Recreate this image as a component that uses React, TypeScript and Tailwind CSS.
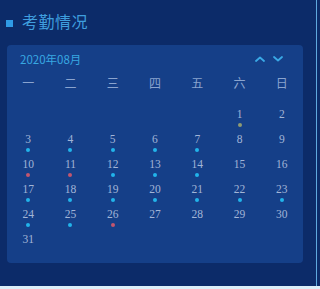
import React from 'react';

const WEEK = ['一', '二', '三', '四', '五', '六', '日'];

// dot marks per day: c = normal, r = abnormal, y = today
const MARKS: Record<number, 'c' | 'r' | 'y'> = {
  1: 'y',
  3: 'c', 4: 'c', 5: 'c', 6: 'c', 7: 'c',
  10: 'r', 11: 'r', 12: 'c', 13: 'c', 14: 'c',
  17: 'c', 18: 'c', 19: 'c', 20: 'c', 21: 'c', 22: 'c', 23: 'c',
  24: 'c', 25: 'c', 26: 'r',
};

const dotClass = {
  c: 'bg-[#22b4ea]',
  r: 'bg-[#c2566e]',
  y: 'bg-[#8f9b72]',
};

const Chevron: React.FC<{ up?: boolean }> = ({ up }) => (
  <svg width="10" height="6" viewBox="0 0 10 6" className="text-[#3aa9e6]">
    <path
      d={up ? 'M1 5 L5 1.5 L9 5' : 'M1 1 L5 4.5 L9 1'}
      fill="none"
      stroke="currentColor"
      strokeWidth="1.8"
      strokeLinecap="round"
      strokeLinejoin="round"
    />
  </svg>
);

export default function App() {
  const cells: (number | null)[] = [...Array(5).fill(null), ...Array.from({ length: 31 }, (_, i) => i + 1)];

  return (
    <div className="w-[320px] h-[289px] bg-[#dceff9] flex flex-col overflow-hidden">
      <div className="h-[286px] flex">
        <div className="w-[316px] bg-[#0c2b69] flex flex-col">
          {/* title */}
          <div className="h-[45px] flex items-start pt-[10px] pl-[6px]">
            <div className="w-[7px] h-[7px] bg-[#2f9be6] mt-[10px]"></div>
            <span className="ml-[9px] text-[16px] leading-[22px] text-[#3f9ede] tracking-[0.5px] font-['Noto_Sans_CJK_SC',sans-serif]">
              考勤情况
            </span>
          </div>

          {/* calendar card */}
          <div className="ml-[7px] w-[296px] h-[218px] rounded-[4px] bg-[#153f88] flex flex-col">
            <div className="h-[28px] pt-[7px] pl-[13px] pr-[20px] flex items-start justify-between">
              <span className="text-[11.5px] leading-[14px] text-[#38a8e2] font-['Noto_Sans_CJK_SC',sans-serif]">
                2020年08月
              </span>
              <div className="flex items-center gap-[8px] mt-[4px]">
                <Chevron up />
                <Chevron />
              </div>
            </div>

            <div className="grid grid-cols-7 h-[20px] items-center">
              {WEEK.map(w => (
                <div key={w} className="text-center text-[12px] leading-[14px] text-[#8aa4cf] font-['Noto_Sans_CJK_SC',sans-serif]">
                  {w}
                </div>
              ))}
            </div>

            <div className="grid grid-cols-7 mt-[15px] font-['Liberation_Serif',serif]">
              {cells.map((d, i) => (
                <div key={i} className="h-[25px] flex flex-col items-center">
                  {d && (
                    <>
                      <span className="text-[11.5px] leading-[13px] text-[#a2b5d7]">{d}</span>
                      {MARKS[d] && <span className={`mt-[2px] w-[4px] h-[4px] rounded-full ${dotClass[MARKS[d]]}`}></span>}
                    </>
                  )}
                </div>
              ))}
            </div>
          </div>
        </div>
        <div className="w-[1px] bg-[#5fa9de]"></div>
        <div className="flex-1 bg-[#0c2b69]"></div>
      </div>
    </div>
  );
}
